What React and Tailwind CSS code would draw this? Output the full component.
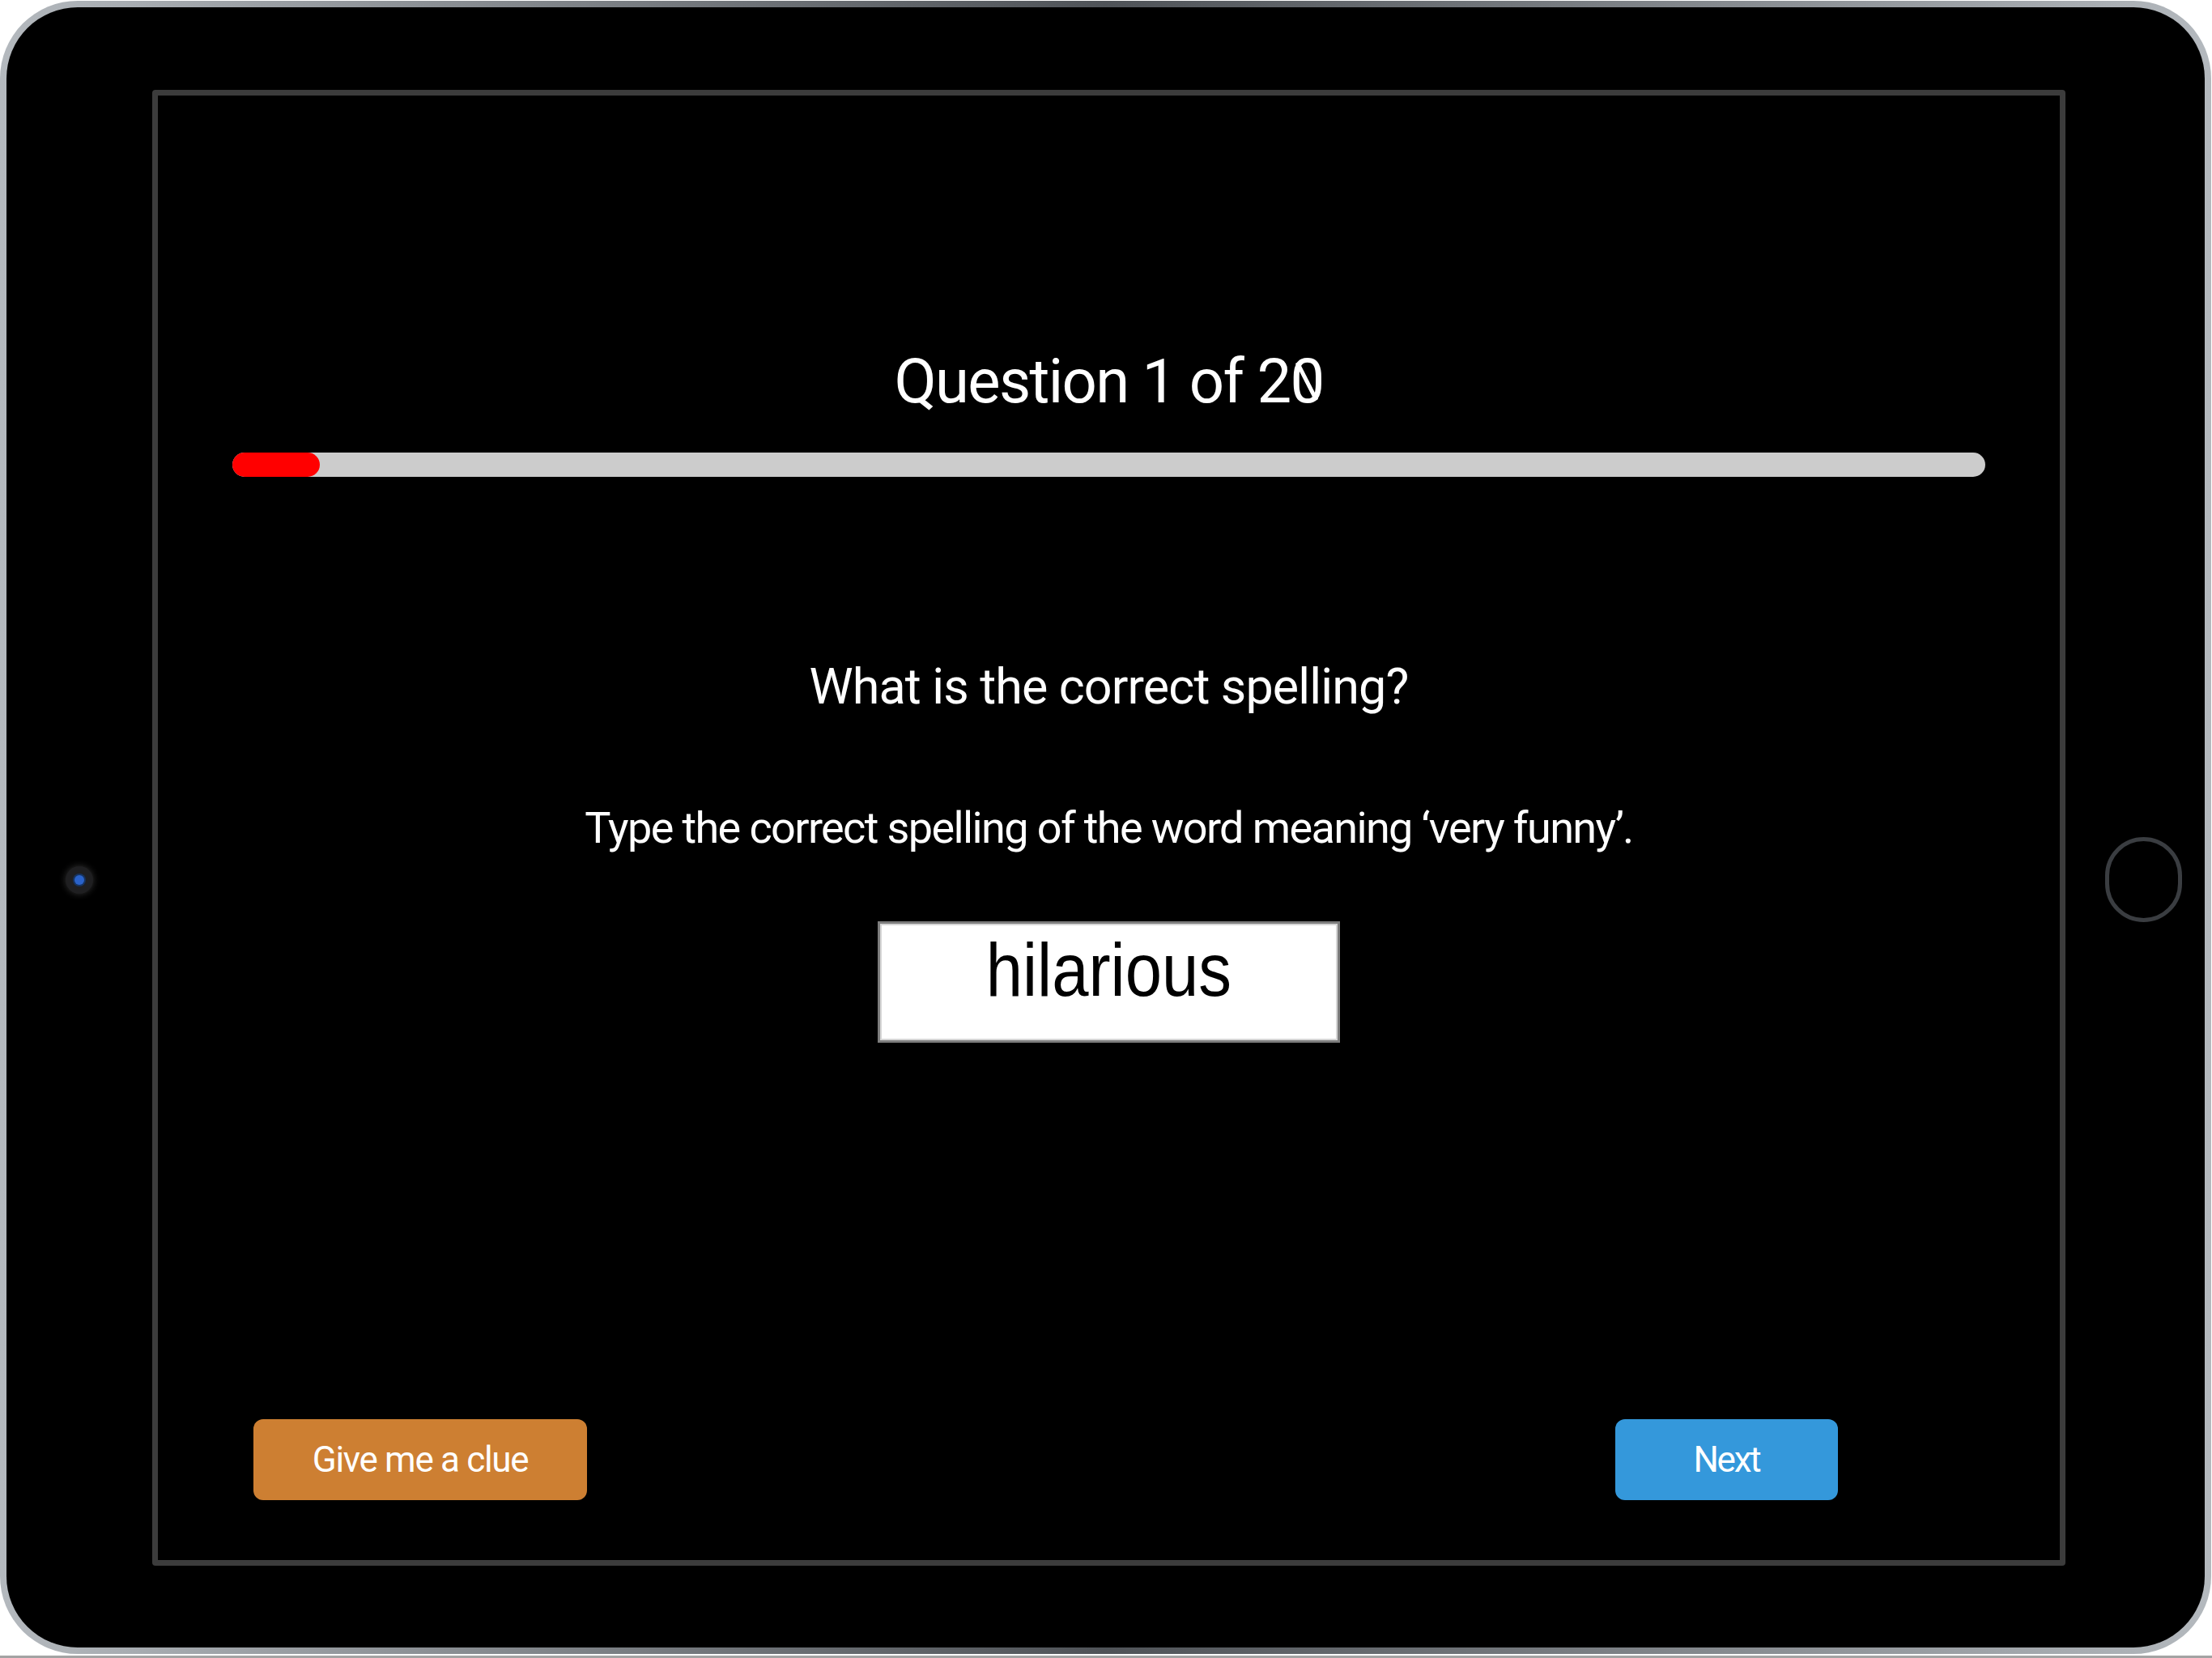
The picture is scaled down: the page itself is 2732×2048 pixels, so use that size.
function SlashedZero() {
  return (
    <span className="relative inline-block">
      0
      <span className="absolute top-1/2 left-1/2 h-[52px] w-[5px] -translate-x-1/2 -translate-y-1/2 -rotate-[27deg] bg-white" />
    </span>
  );
}

function Camera() {
  return (
    <div className="flex h-[34px] w-[34px] items-center justify-center rounded-full bg-[#1f1f21] shadow-[0_0_8px_rgba(110,110,110,0.45)]">
      <div className="h-[12px] w-[12px] rounded-full bg-[#2a62c9] ring-2 ring-[#16335f]" />
    </div>
  );
}

function HomeButton() {
  return <div className="h-[105px] w-[95px] rounded-full border-[5px] border-[#3a3d41]" />;
}

function Screen() {
  return (
    <div className="flex w-[2363px] flex-col rounded-[4px] border-[7px] border-[#3c3c3c] text-white">
      <h1 className="mt-[315px] text-center text-[76px] leading-none font-normal tracking-[-0.022em]">
        Question 1 of 2<SlashedZero />
      </h1>

      <div className="mx-[92px] mt-[50px] h-[30px] rounded-full bg-[#cccccc]">
        <div className="h-full w-[108px] rounded-full bg-[#ff0000]" />
      </div>

      <p className="mt-[229px] text-center text-[61px] leading-none tracking-[-0.014em]">
        What is the correct spelling?
      </p>
      <p className="mt-[117px] text-center text-[54px] leading-none tracking-[-0.03em]">
        Type the correct spelling of the word meaning ‘very funny’.
      </p>

      <div className="mt-[88px] h-[150px] w-[571px] self-center border-[3px] border-[#7d7d7d] bg-white pt-[11px] text-center shadow-[inset_0_0_0_2px_#d6d6d6]">
        <span className="inline-block scale-x-[0.885] font-['Liberation_Sans',Arial,sans-serif] text-[92px] leading-none text-black">
          hilarious
        </span>
      </div>

      <div className="mt-auto flex items-center justify-between pr-[274px] pb-[74px] pl-[118px]">
        <button className="flex h-[100px] w-[412px] items-center justify-center rounded-[12px] bg-[#cd7f32] text-[44px] leading-none tracking-[-0.03em] text-white">
          Give me a clue
        </button>
        <button className="flex h-[100px] w-[275px] items-center justify-center rounded-[12px] bg-[#3498db] text-[44px] leading-none tracking-[-0.05em] text-white">
          Next
        </button>
      </div>
    </div>
  );
}

export default function App() {
  return (
    <div className="flex h-[2048px] w-[2732px] flex-col overflow-hidden bg-white font-['Roboto',sans-serif]">
      <div className="mt-[1px] h-[2042px] w-[2731px] rounded-[96px] bg-gradient-to-r from-[#b4b9be] via-[#4f5358] to-[#b4b9be] p-[8px]">
        <div className="flex h-full w-full rounded-[88px] bg-black pt-[102px] pb-[101px]">
          <div className="flex w-[180px] items-center justify-center pt-[128px]">
            <Camera />
          </div>
          <Screen />
          <div className="flex flex-1 items-center justify-center pt-[128px] pl-[21px]">
            <HomeButton />
          </div>
        </div>
      </div>
      <div className="mt-auto h-[3px] bg-[#a3a3a3]" />
    </div>
  );
}
